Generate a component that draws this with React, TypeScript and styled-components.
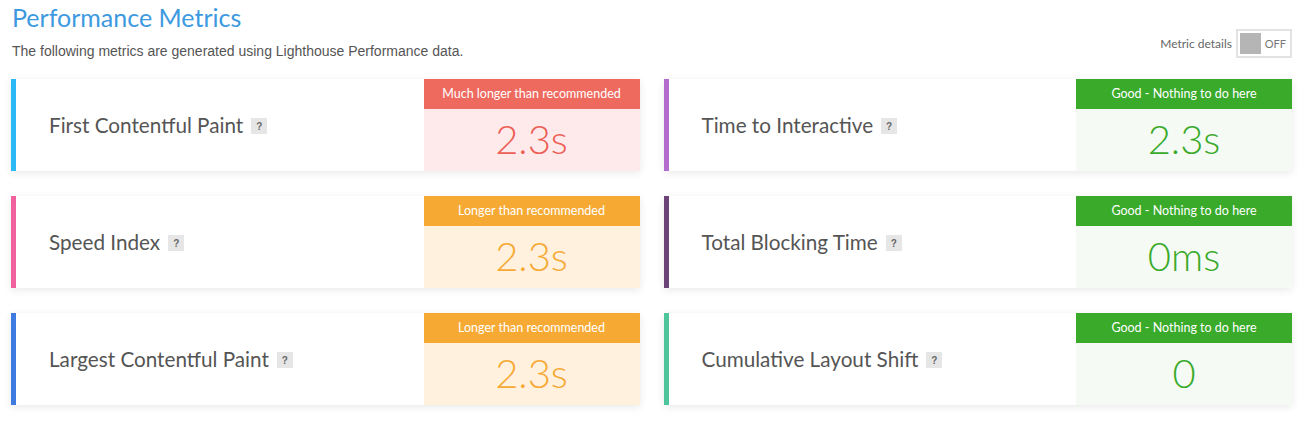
import styled, { createGlobalStyle } from 'styled-components';

const GlobalStyle = createGlobalStyle`
  body {
    margin: 0;
    background: #ffffff;
    font-family: Lato, "Open Sans", sans-serif;
  }
`;

const tones = {
  bad: { head: '#ee6a5f', bg: '#feeaea', text: '#ec5f56' },
  warn: { head: '#f6aa34', bg: '#fff1dd', text: '#f6a935' },
  good: { head: '#3aaa2b', bg: '#f5fbf4', text: '#3aaa2b' },
};

type Tone = keyof typeof tones;

const Page = styled.div`
  padding: 0 18px 16px 11px;
`;

const Header = styled.div`
  display: flex;
  justify-content: space-between;
  align-items: flex-end;
  height: 79px;
  box-sizing: border-box;
  padding-bottom: 20px;
`;

const Intro = styled.div`
  padding-left: 1px;
`;

const Title = styled.h2`
  margin: 0;
  font-size: 25px;
  font-weight: 400;
  line-height: 30px;
  color: #3d99e0;
`;

const Subtitle = styled.p`
  margin: 11px 0 0;
  font-family: "Liberation Sans", Arial, sans-serif;
  font-size: 14px;
  line-height: 16px;
  color: #555555;
`;

const ToggleWrap = styled.div`
  display: flex;
  align-items: center;
  gap: 4px;
  margin-bottom: 1px;
  font-size: 12px;
  color: #666666;
`;

const Switch = styled.div`
  display: flex;
  align-items: center;
  gap: 4px;
  width: 56px;
  height: 29px;
  box-sizing: border-box;
  padding: 0 4px 0 2px;
  border: 2px solid #e2e2e2;
  background: #ffffff;
`;

const Knob = styled.span`
  width: 23px;
  height: 21px;
  background: #b5b5b5;
`;

const SwitchLabel = styled.span`
  font-size: 11px;
  color: #777777;
`;

const Grid = styled.div`
  display: grid;
  grid-template-columns: 1fr 1fr;
  column-gap: 24px;
  row-gap: 25px;
`;

const Card = styled.div<{ accent: string }>`
  display: flex;
  height: 92px;
  background: #ffffff;
  border-left: 5px solid ${({ accent }) => accent};
  box-shadow: 0 2px 8px rgba(0, 0, 0, 0.09);
`;

const Name = styled.div`
  flex: 1;
  display: flex;
  align-items: center;
  gap: 8px;
  padding: 0 0 0 33px;
  font-size: 20.7px;
  color: #555555;
`;

const Help = styled.span`
  display: inline-flex;
  align-items: center;
  justify-content: center;
  width: 16px;
  height: 16px;
  margin-top: 2px;
  background: #e6e6e6;
  color: #666666;
  font-family: "Liberation Sans", Arial, sans-serif;
  font-size: 10px;
  font-weight: 700;
`;

const Grade = styled.div<{ tone: Tone }>`
  display: flex;
  flex-direction: column;
  width: 216px;
  background: ${({ tone }) => tones[tone].bg};
`;

const GradeHead = styled.div<{ tone: Tone }>`
  height: 30px;
  line-height: 30px;
  text-align: center;
  font-size: 12.5px;
  color: #ffffff;
  background: ${({ tone }) => tones[tone].head};
`;

const Value = styled.div<{ tone: Tone }>`
  flex: 1;
  display: flex;
  align-items: center;
  justify-content: center;
  padding-bottom: 3px;
  font-size: 40px;
  font-weight: 300;
  color: ${({ tone }) => tones[tone].text};
`;

const labels: Record<Tone, string> = {
  bad: 'Much longer than recommended',
  warn: 'Longer than recommended',
  good: 'Good - Nothing to do here',
};

const metrics: { name: string; accent: string; tone: Tone; value: string }[] = [
  { name: 'First Contentful Paint', accent: '#2bb8f4', tone: 'bad', value: '2.3s' },
  { name: 'Time to Interactive', accent: '#b36ccd', tone: 'good', value: '2.3s' },
  { name: 'Speed Index', accent: '#f0629e', tone: 'warn', value: '2.3s' },
  { name: 'Total Blocking Time', accent: '#6c4479', tone: 'good', value: '0ms' },
  { name: 'Largest Contentful Paint', accent: '#3e7be0', tone: 'warn', value: '2.3s' },
  { name: 'Cumulative Layout Shift', accent: '#4fc59c', tone: 'good', value: '0' },
];

export default function App() {
  return (
    <>
      <GlobalStyle />
      <Page>
        <Header>
          <Intro>
            <Title>Performance Metrics</Title>
            <Subtitle>The following metrics are generated using Lighthouse Performance data.</Subtitle>
          </Intro>
          <ToggleWrap>
            Metric details
            <Switch>
              <Knob />
              <SwitchLabel>OFF</SwitchLabel>
            </Switch>
          </ToggleWrap>
        </Header>
        <Grid>
          {metrics.map((m) => (
            <Card key={m.name} accent={m.accent}>
              <Name>
                {m.name}
                <Help>?</Help>
              </Name>
              <Grade tone={m.tone}>
                <GradeHead tone={m.tone}>{labels[m.tone]}</GradeHead>
                <Value tone={m.tone}>{m.value}</Value>
              </Grade>
            </Card>
          ))}
        </Grid>
      </Page>
    </>
  );
}
